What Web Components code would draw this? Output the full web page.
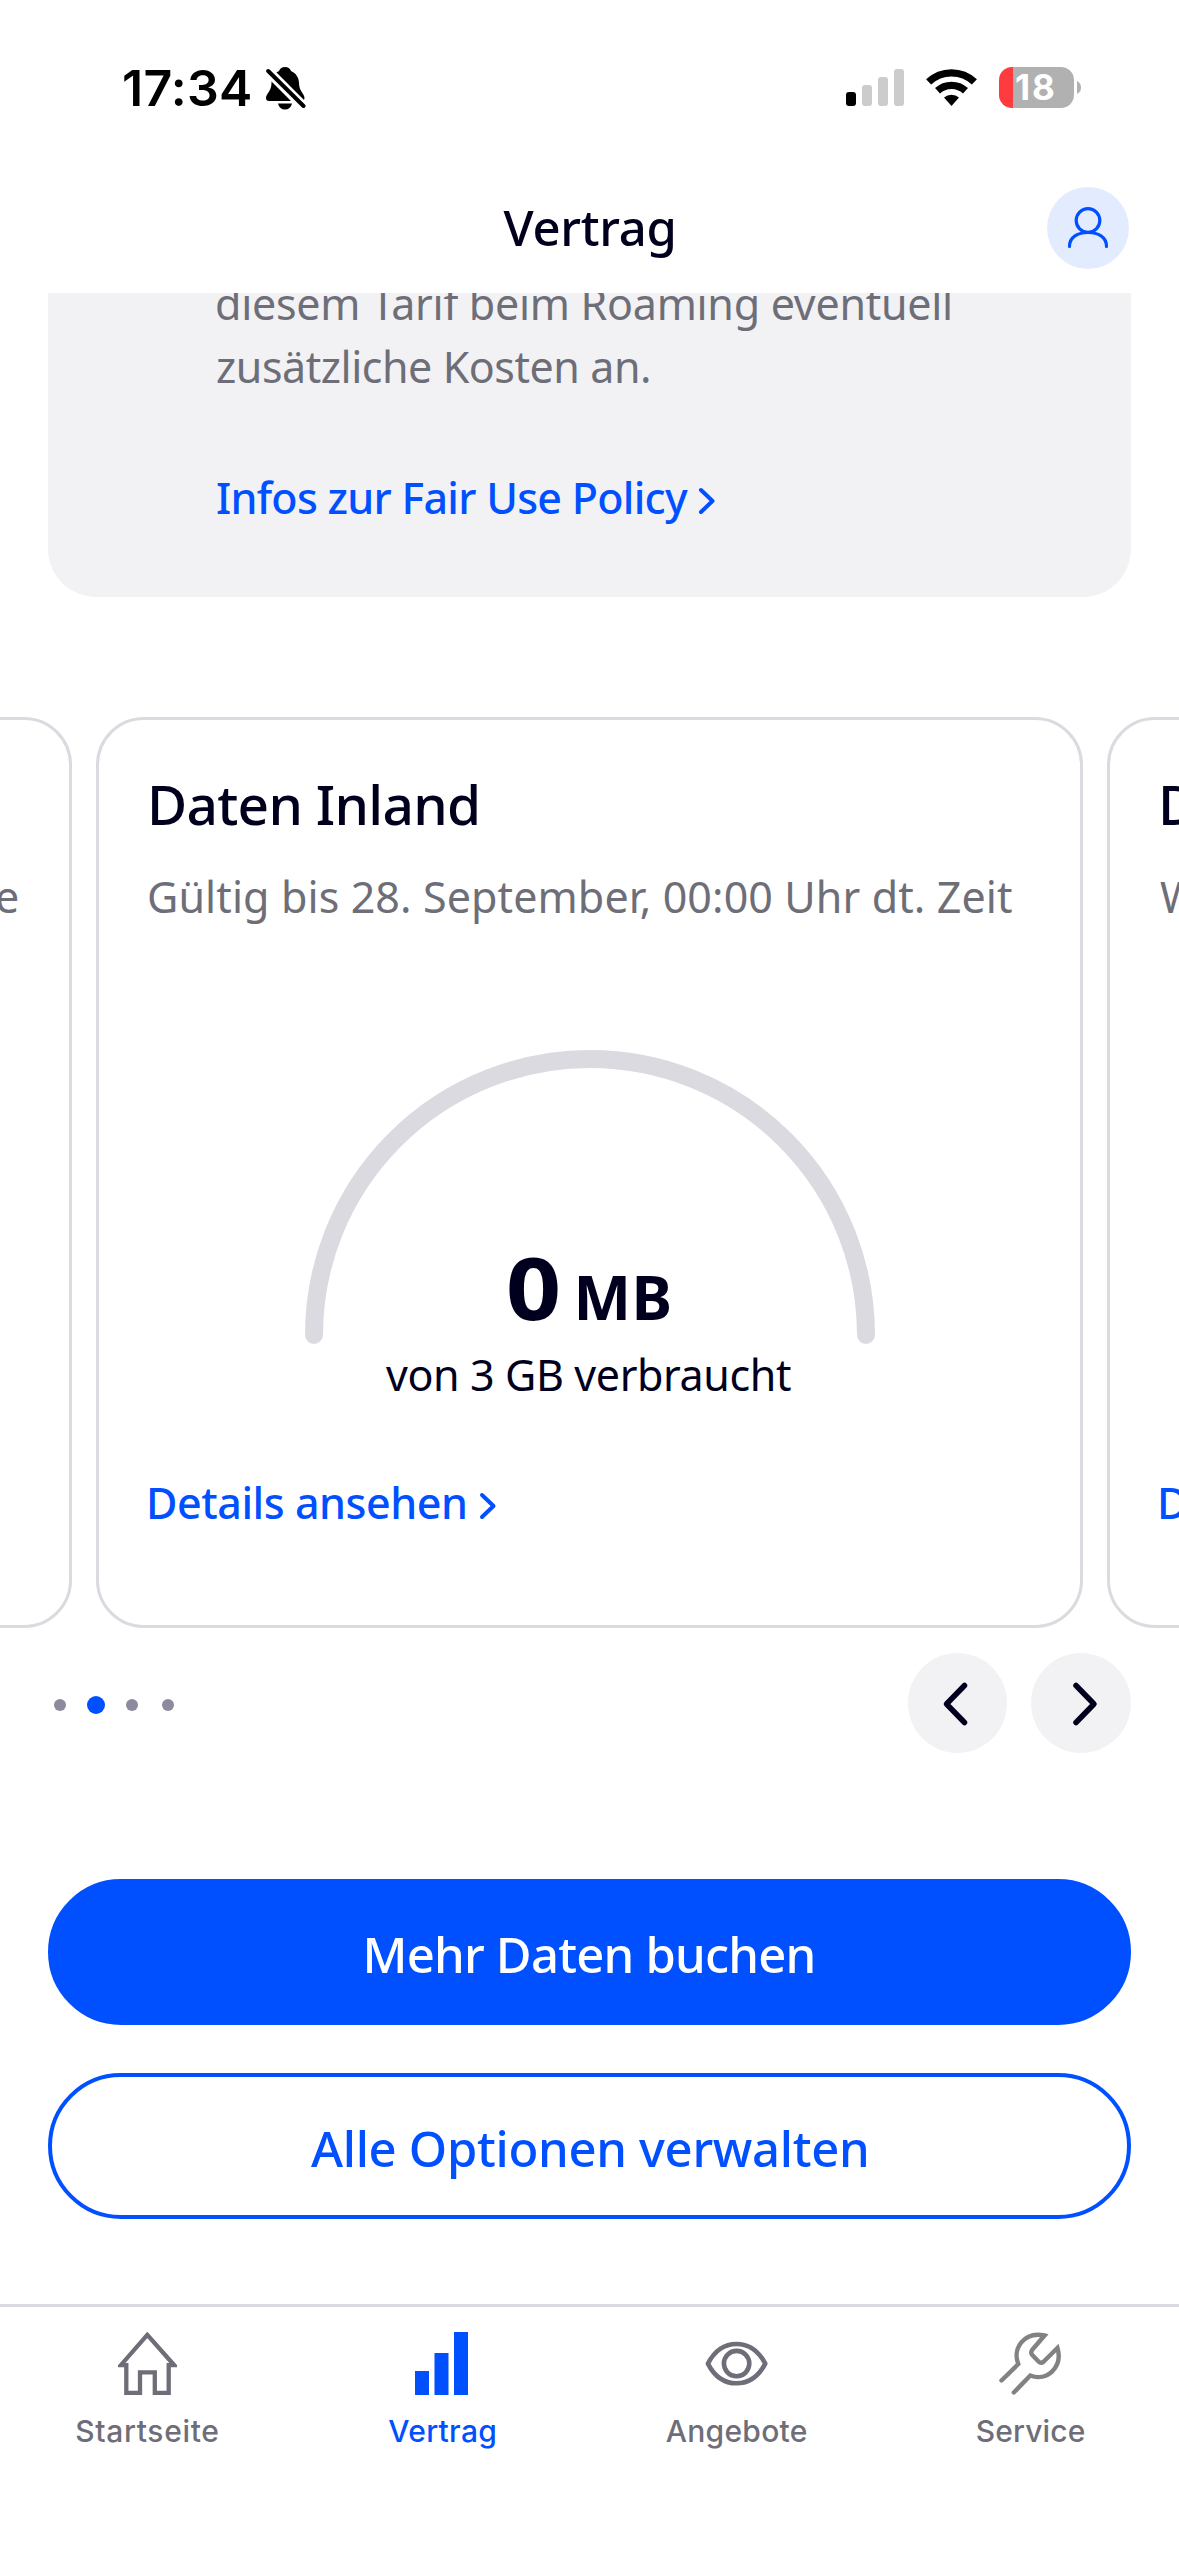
<!DOCTYPE html>
<html lang="de">
<head>
<meta charset="utf-8">
<title>Vertrag</title>
<style>
  html, body { margin: 0; background: #fff; }
  body { width: 1179px; height: 2556px; overflow: hidden; font-family: "Noto Sans", "Open Sans", sans-serif; color: #00001e;
    --blue: #0050ff; --grey: #6e6e78; --line: #dadae0; --soft: #f2f2f5; }
</style>
</head>
<body>
<app-screen></app-screen>
<script>
const define = (name, html, setup) => {
  const tpl = document.createElement('template');
  tpl.innerHTML = html;
  customElements.define(name, class extends HTMLElement {
    constructor() {
      super();
      this.attachShadow({ mode: 'open' }).append(tpl.content.cloneNode(true));
    }
    connectedCallback() { if (setup) setup(this, this.shadowRoot); }
  });
};

/* Single line of text whose box equals its ink; "fit" sets the ink width via tracking. */
const ctx = document.createElement('canvas').getContext('2d');
define('ui-text', `<style>
  :host { display: block; white-space: nowrap; width: max-content; flex: none; }
</style><slot></slot>`, el => {
  const t = el.textContent, cs = getComputedStyle(el);
  ctx.font = `${cs.fontWeight} ${cs.fontSize} ${cs.fontFamily}`;
  const m = ctx.measureText(t);
  const ink = m.actualBoundingBoxLeft + m.actualBoundingBoxRight;
  const fit = parseFloat(el.getAttribute('fit'));
  const ls = fit && t.length > 1 ? (fit - ink) / (t.length - 1) : 0;
  el.style.letterSpacing = ls + 'px';
  el.style.marginLeft = m.actualBoundingBoxLeft + 'px';
  el.style.marginRight = -(m.width - m.actualBoundingBoxRight) - ls + 'px';
});

define('status-bar', `<style>
  :host { display: flex; height: 162px; box-sizing: border-box; padding: 67px 98px 0 124px; justify-content: space-between; align-items: flex-start; color: #000; font-family: Inter, sans-serif; }
  .side { display: flex; height: 43px; }
  .time { font-size: 50px; font-weight: 600; line-height: 43px; }
  .bell { margin-left: 16px; }
  svg { display: block; flex: none; }
  .signal { margin: 2px 22px 0 0; }
  .wifi { margin: 2px 22px 0 0; }
  .bat { display: flex; align-items: center; height: 41px; }
  .cell { width: 75px; height: 41px; border-radius: 13px; background: linear-gradient(90deg, #ff3b3f 14px, #b1b1b1 14px); color: #fff; font-size: 35px; font-weight: 700; line-height: 41px; display: flex; padding-left: 17px; box-sizing: border-box; }
  .nub { margin-left: 3px; }
</style>
<div class="side"><ui-text class="time" fit="126">17:34</ui-text>
<svg class="bell" width="40" height="44" viewBox="0 0 40 44"><path d="M19 0C16 0 14 1.5 13 4C8 6 5.5 11 5.5 16C5.5 24 0 27 0 31C0 33 1 34 3 34H35C37 34 38.5 33 38.5 31C38.5 27 33 24 33 16C33 11 30 6 25 4C24 1.5 22 0 19 0ZM12 36.5H26C25 40.5 22.500 42.500 19 42.500S13 40.500 12 36.500Z"/><path d="M1 3L38 40" stroke="#fff" stroke-width="10"/><path d="M2.200 4L37.500 39" stroke="#000" stroke-width="4" stroke-linecap="round"/></svg></div>
<div class="side">
<svg class="signal" width="58" height="37" viewBox="0 0 58 37"><rect y="23" width="10" height="14" rx="3"/><g fill="#ccc"><rect x="16" y="16" width="10" height="21" rx="3"/><rect x="32" y="8" width="10" height="29" rx="3"/><rect x="48" width="10" height="37" rx="3"/></g></svg>
<svg class="wifi" width="51" height="37" viewBox="0 0 51 37"><g fill="none" stroke="#000" stroke-width="7.300"><path d="M2.600 12.900A33.300 33.300 0 0 1 48.400 12.900"/><path d="M11.500 21.800A20.600 20.600 0 0 1 39.500 21.800"/></g><path d="M18 28.500A11.700 11.700 0 0 1 33 28.500L25.500 37Z" stroke-linejoin="round"/></svg>
<div class="bat"><div class="cell"><ui-text fit="38">18</ui-text></div><svg class="nub" width="4" height="13" viewBox="0 0 4 13"><path d="M0 0Q4 2 4 6.500T0 13Z" fill="#b1b1b1"/></svg></div>
</div>`);

define('app-header', `<style>
  :host { display: grid; grid-template-columns: 1fr auto 1fr; height: 131px; align-items: start; padding: 0 50px 0 48px; box-sizing: border-box; background: #fff; }
  .title { grid-column: 2; font-size: 49px; line-height: 66px; font-weight: 540; padding-top: 32px; }
  .avatar { justify-self: end; margin-top: 25px; width: 82px; height: 82px; border-radius: 50%; background: #e3ecff; display: flex; align-items: center; justify-content: center; }
</style>
<ui-text class="title" fit="170">Vertrag</ui-text>
<div class="avatar"><svg width="82" height="82" viewBox="0 0 82 82" fill="none" stroke="#0050ff" stroke-width="3.200" stroke-linecap="round"><circle cx="41" cy="33.500" r="11.800"/><path d="M22.500 59.500C22.500 50 31 45.500 41 45.500S59.500 50 59.500 59.500"/></svg></div>`);

define('chevron-link', `<style>
  :host { display: flex; align-items: center; color: var(--blue); font-size: 43px; font-weight: 530; line-height: 60px; }
  svg { display: block; flex: none; margin-top: 6px; }
</style><slot></slot><svg width="18" height="28" viewBox="0 0 18 28" fill="none" stroke="currentColor" stroke-width="4" stroke-linecap="round" stroke-linejoin="round"><path d="M3 3L14.500 14L3 25"/></svg>`,
 (el, r) => { r.querySelector('svg').style.marginLeft = el.getAttribute('gap') + 'px'; });

define('info-panel', `<style>
  :host { display: block; height: 304px; margin: 0 48px; padding: 0 0 0 169px; box-sizing: border-box; border-radius: 0 0 48px 48px; background: var(--soft); overflow: hidden; color: var(--grey); font-size: 43px; line-height: 63px; font-weight: 430; }
  .text { margin-top: -21px; }
  chevron-link { margin-top: 70px; }
</style>
<div class="text"><ui-text fit="733">diesem Tarif beim Roaming eventuell</ui-text><ui-text fit="432">zusätzliche Kosten an.</ui-text></div>
<chevron-link gap="10"><ui-text fit="471">Infos zur Fair Use Policy</ui-text></chevron-link>`);

define('usage-gauge', `<style>
  :host { display: grid; width: 570px; height: 345px; justify-items: center; align-content: start; }
  svg { grid-area: 1 / 1; display: block; }
  .value { grid-area: 1 / 1; align-self: end; display: flex; align-items: baseline; gap: 22px; font-weight: 700; line-height: 90px; margin-bottom: 4px; padding-left: 2px; }
  .num { font-size: 86px; transform: scaleX(1.12); } .unit { font-size: 61px; }
  .sub { font-size: 43px; line-height: 60px; margin-top: -1px; padding-right: 3px; font-weight: 430; }
</style>
<svg width="570" height="296" viewBox="0 0 570 296"><path d="M9 285A276 276 0 0 1 561 285" fill="none" stroke="#dadae0" stroke-width="18" stroke-linecap="round"/></svg>
<div class="value"><ui-text class="num">0</ui-text><ui-text class="unit" fit="91">MB</ui-text></div>
<ui-text class="sub" fit="405">von 3 GB verbraucht</ui-text>`);

define('data-card', `<style>
  :host { display: flex; flex-direction: column; flex: none; width: 987px; height: 911px; box-sizing: border-box; border: 3px solid var(--line); border-radius: 48px; padding: 46px 51px 0 50px; }
  .title { font-size: 55px; font-weight: 550; line-height: 76px; height: 76px; padding-left: 3px; }
  .date { font-size: 43px; line-height: 60px; margin-top: 25px; color: var(--grey); font-weight: 430; }
  .body { height: 345px; margin: 123px 0 78px 156px; flex: none; }
  .link { padding-left: 1px; }
  :host([align=end]) .date { align-self: flex-end; }
</style>
<div class="title"><slot name="title"></slot></div><div class="date"><slot name="date"></slot></div>
<div class="body"><slot></slot></div><div class="link"><slot name="link"></slot></div>`);

define('data-carousel', `<style>
  :host { display: flex; gap: 24px; height: 911px; margin: 120px 0 0 -915px; width: 3200px; }
</style>
<data-card align="end"><ui-text slot="date">e</ui-text></data-card>
<data-card><ui-text slot="title" fit="325">Daten Inland</ui-text><ui-text slot="date" fit="863">Gültig bis 28. September, 00:00 Uhr dt. Zeit</ui-text><usage-gauge></usage-gauge><chevron-link slot="link" gap="14"><ui-text fit="315">Details ansehen</ui-text></chevron-link></data-card>
<data-card><ui-text slot="title">D</ui-text><ui-text slot="date">W</ui-text><chevron-link slot="link" gap="13"><ui-text>D</ui-text></chevron-link></data-card>`);

define('carousel-controls', `<style>
  :host { display: flex; align-items: center; height: 100px; margin: 25px 48px 0 51px; }
  .dots { display: flex; flex: 1; gap: 18px; padding-top: 4px; }
  i { width: 18px; height: 18px; display: flex; align-items: center; justify-content: center; }
  i::before { content: ""; width: 12px; height: 12px; border-radius: 50%; background: #8c8a9c; }
  i.on::before { width: 18px; height: 18px; background: var(--blue); }
  .nav { display: flex; gap: 24px; }
  b { width: 100px; height: 100px; border-radius: 50%; background: var(--soft); }
  b:first-child { width: 99px; }
  svg { display: block; }
</style>
<div class="dots"><i></i><i class="on"></i><i></i><i></i></div>
<div class="nav"><b><svg width="99" height="100" fill="none" stroke="#00001e" stroke-width="5.500" stroke-linecap="round" stroke-linejoin="round"><path d="M56.500 32.500L38.500 51L56.500 69.500"/></svg></b><b><svg width="100" height="100" fill="none" stroke="#00001e" stroke-width="5.500" stroke-linecap="round" stroke-linejoin="round"><path d="M45 32.500L63 51L45 69.500"/></svg></b></div>`);

define('pill-button', `<style>
  :host { display: flex; justify-content: center; height: 146px; box-sizing: border-box; border: 4px solid var(--blue); border-radius: 73px; margin: 0 48px; padding: 37px 2px 0 0; font-size: 49px; font-weight: 520; line-height: 68px; color: var(--blue); }
  :host([primary]) { background: var(--blue); color: #fff; padding-right: 0; }
</style><slot></slot>`);

define('tab-item', `<style>
  :host { display: flex; flex-direction: column; align-items: center; flex: 1; color: var(--grey); font: 500 30px/40px Inter, sans-serif; }
  :host([active]) { color: var(--blue); }
  .icon { height: 63px; margin: 25px 0 16px; display: flex; align-items: center; }
</style><div class="icon"><slot name="icon"></slot></div><slot></slot>`);

define('tab-bar', `<style>
  :host { display: flex; height: 252px; border-top: 3px solid var(--line); box-sizing: border-box; background: #fff; padding-right: 1px; }
  tab-item:first-child { padding-right: 1px; }
  svg { display: block; }
</style>
<tab-item><svg slot="icon" width="59" height="63" viewBox="0 0 59 63" fill="none" stroke="currentColor" stroke-width="4.300" stroke-linejoin="miter"><path d="M29.300 2.900L2.800 33.200H8.300V60.900H22V40.300H36.800V60.900H50.700V33.200H56.200Z"/></svg><ui-text fit="142">Startseite</ui-text></tab-item>
<tab-item active><svg slot="icon" width="53" height="63" viewBox="0 0 53 63" fill="currentColor"><path d="M0 39H14V63H0ZM19.500 21H33.500V63H19.500ZM39 0H53V63H39Z"/></svg><ui-text fit="107">Vertrag</ui-text></tab-item>
<tab-item><svg slot="icon" width="63" height="45" viewBox="0 0 63 45" fill="none" stroke="currentColor" stroke-width="4.600"><path d="M2.900 22.600C10 9 20 3 31.600 3S53 9 60.300 22.600C53 36.500 43 42.300 31.600 42.300S10 36.500 2.900 22.600Z" stroke-linejoin="round"/><circle cx="31.600" cy="22.600" r="12.700"/></svg><ui-text fit="141">Angebote</ui-text></tab-item>
<tab-item><svg slot="icon" width="63" height="63" viewBox="0 0 63 63" fill="none" stroke="#808284" stroke-width="4.400" stroke-linecap="round"><path d="M2.500 48.500L19.300 32C13 17 25 -1 45.500 3.500L33.500 17.500Q31 20.500 33.500 23.200L39.500 29.500Q42 32 44.800 29.500L58.500 16C64 35 48 50 31.300 43.500L14.800 60.500"/></svg><ui-text fit="108">Service</ui-text></tab-item>`);

define('app-screen', `<style>
  :host { display: flex; flex-direction: column; width: 1179px; height: 2556px; overflow: hidden; background: #fff; }
  main { flex: 1; min-height: 0; overflow: hidden; display: flex; flex-direction: column; }
  info-panel, data-carousel, carousel-controls, pill-button { flex: none; }
  .actions { display: flex; flex-direction: column; gap: 48px; margin-top: 126px; }
</style>
<status-bar></status-bar><app-header></app-header>
<main><info-panel></info-panel><data-carousel></data-carousel><carousel-controls></carousel-controls>
<div class="actions"><pill-button primary><ui-text fit="446">Mehr Daten buchen</ui-text></pill-button><pill-button><ui-text fit="555">Alle Optionen verwalten</ui-text></pill-button></div></main>
<tab-bar></tab-bar>`);
</script>
</body>
</html>
